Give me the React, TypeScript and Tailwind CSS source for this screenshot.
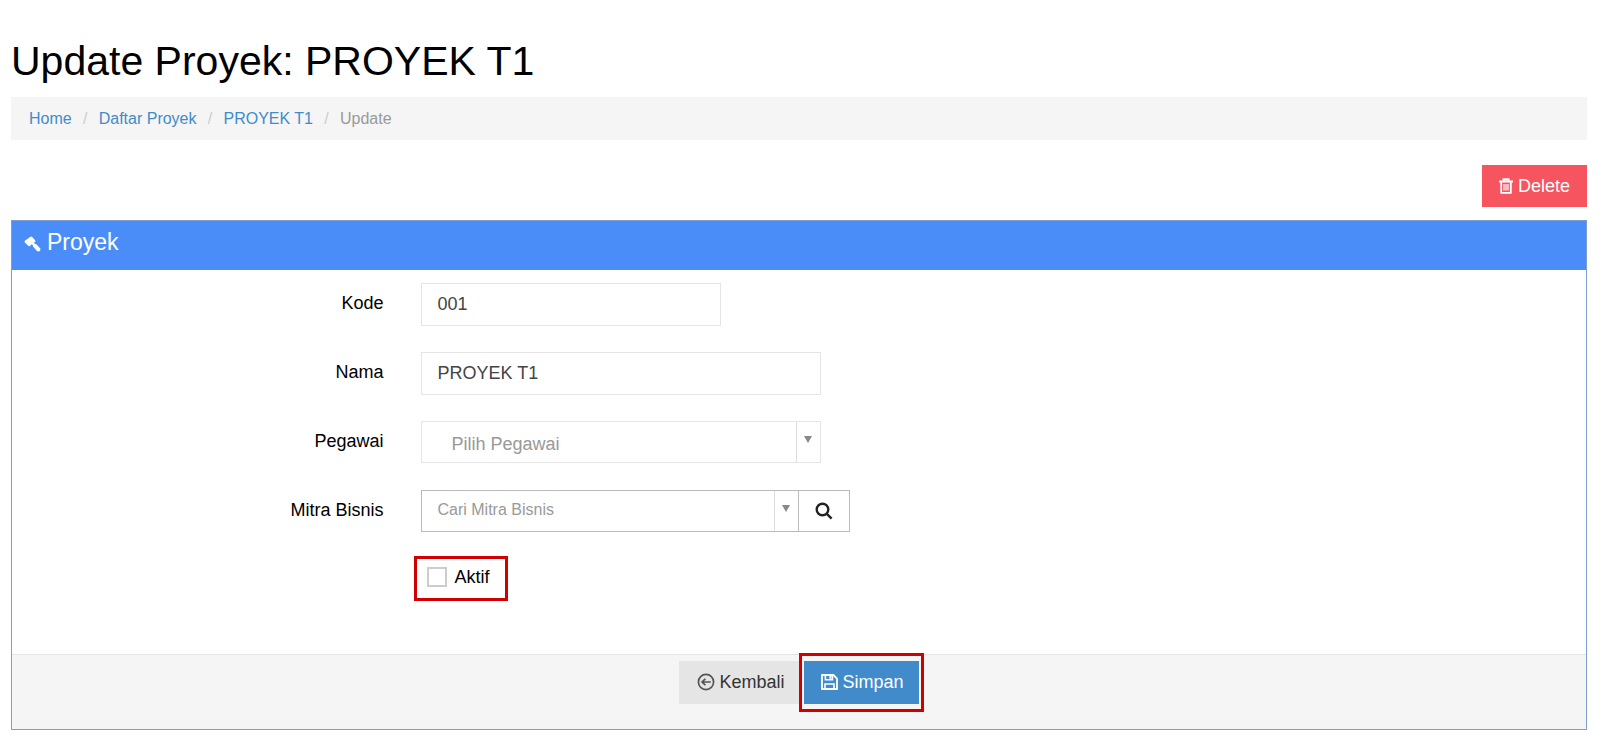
import { useState } from 'react';
import type { ReactNode } from 'react';

const FIELD = 'border bg-white px-4 text-[18px] text-[#444] outline-none';

const crumbs = [
  { label: 'Home', href: '#home' },
  { label: 'Daftar Proyek', href: '#proyek' },
  { label: 'PROYEK T1', href: '#proyek-t1' },
];

function TrashIcon() {
  return (
    <svg viewBox="0 0 14 16" className="h-4 w-3.5" fill="none" stroke="currentColor">
      <path d="M0 3.5h14M4.5 3.2V1.2h5v2" strokeWidth="2" />
      <path d="M2.2 3.5v11.3h9.6V3.5" strokeWidth="1.8" />
      <path d="M5 6v6.6M7 6v6.6M9 6v6.6" strokeWidth="1.2" />
    </svg>
  );
}

function GavelIcon() {
  return (
    <svg viewBox="0 0 17 16" className="mt-1 h-4 w-[17px] shrink-0" fill="currentColor">
      <path d="M6.8 0.4 8.2 0.9 11.4 4.6 11.2 6 9.9 6.6 10.8 7.8 12 8 16.4 12.6 16.2 14.4 14.8 15.6 13.2 15.2 9 10.4 8.8 9 7.6 8.2 6.6 9.6 5.2 10.2 4.2 9.8 0.6 6.2 0.6 5 1.6 4.2Z" />
    </svg>
  );
}

function BackIcon() {
  return (
    <svg viewBox="0 0 18 18" className="h-[18px] w-[18px] shrink-0 text-[#555]" fill="none" stroke="currentColor">
      <circle cx="9" cy="9" r="7.6" strokeWidth="1.7" />
      <path d="M13.8 9H5M8.4 5.8 5 9l3.4 3.2" strokeWidth="1.7" />
    </svg>
  );
}

function SaveIcon() {
  return (
    <svg viewBox="0 0 17 16" className="h-4 w-[17px] shrink-0" fill="none" stroke="currentColor">
      <path d="M1 1h11.4L16 4.6V15H1Z" strokeWidth="1.8" />
      <path d="M4 15V10h9v5M4.4 1v4.8h7V1" strokeWidth="1.6" />
      <path d="M9.4 1.4v3.4" strokeWidth="2" />
    </svg>
  );
}

function SearchIcon() {
  return (
    <svg viewBox="0 0 18 18" className="h-[18px] w-[18px]" fill="none" stroke="currentColor" strokeWidth="2.4">
      <circle cx="7.5" cy="7.5" r="5.8" />
      <path d="m11.6 11.6 5 5" />
    </svg>
  );
}

function Row({ label, htmlFor, children }: { label: string; htmlFor: string; children: ReactNode }) {
  return (
    <div className="mb-[26px] flex h-[43px] items-start">
      <label htmlFor={htmlFor} className="w-1/4 pt-2 pr-5 text-right">
        {label}
      </label>
      <div className="flex flex-1 pl-[17px]">{children}</div>
    </div>
  );
}

interface PickerProps {
  id: string;
  placeholder: string;
  wrapClass: string;
  selectClass: string;
}

function Picker({ id, placeholder, wrapClass, selectClass }: PickerProps) {
  return (
    <div className={`relative flex border ${wrapClass}`}>
      <select id={id} className={`h-10 flex-1 appearance-none bg-white text-[#999] outline-none ${selectClass}`}>
        <option>{placeholder}</option>
      </select>
      <span className="pointer-events-none absolute inset-y-0 right-0 flex w-6 justify-center border-l border-[#ddd] pt-3.5">
        <svg viewBox="0 0 8 7" className="h-[7px] w-2" fill="#888">
          <path d="M0 0h8L4 7Z" />
        </svg>
      </span>
    </div>
  );
}

export default function App() {
  const [kode, setKode] = useState('001');
  const [nama, setNama] = useState('PROYEK T1');
  const [aktif, setAktif] = useState(false);

  return (
    <main className="bg-white pt-9 pr-[13px] pb-[7px] pl-[11px] font-['Liberation_Sans',Arial,sans-serif] text-[18px] leading-6 text-black">
      <h1 className="mb-[11px] text-[41px] leading-[50px]">Update Proyek: PROYEK T1</h1>

      <nav aria-label="Breadcrumb" className="bg-[#f5f5f5] px-[18px] pt-2.5 pb-[9px] text-base">
        <ol className="flex">
          {crumbs.map((c) => (
            <li key={c.href} className="flex">
              <a href={c.href} className="text-[#428bca]">
                {c.label}
              </a>
              <span className="w-[27px] text-center text-[#ccc]">/</span>
            </li>
          ))}
          <li className="text-[#999]">Update</li>
        </ol>
      </nav>

      <div className="mt-[25px] mb-[13px] flex justify-end">
        <button type="button" className="flex h-[42px] items-center gap-[5px] bg-[#f6545f] px-[17px] text-white">
          <TrashIcon />
          Delete
        </button>
      </div>

      <form className="border border-[#7d9fd0]" onSubmit={(e) => e.preventDefault()}>
        <h2 className="flex h-[49px] items-center gap-1.5 bg-[#4b8df8] px-3 pb-2 text-[23px] text-white">
          <GavelIcon />
          Proyek
        </h2>

        <div className="pt-[13px] pr-2 pb-[26px]">
          <Row label="Kode" htmlFor="kode">
            <input
              id="kode"
              value={kode}
              onChange={(e) => setKode(e.target.value)}
              className={`${FIELD} h-[43px] w-[300px] border-[#e5e5e5]`}
            />
          </Row>
          <Row label="Nama" htmlFor="nama">
            <input
              id="nama"
              value={nama}
              onChange={(e) => setNama(e.target.value)}
              className={`${FIELD} h-[43px] w-[400px] border-[#e5e5e5]`}
            />
          </Row>
          <Row label="Pegawai" htmlFor="pegawai">
            <Picker
              id="pegawai"
              placeholder="Pilih Pegawai"
              wrapClass="h-[42px] w-[400px] border-[#e5e5e5]"
              selectClass="pt-1 pl-[30px]"
            />
          </Row>
          <Row label="Mitra Bisnis" htmlFor="mitra">
            <Picker
              id="mitra"
              placeholder="Cari Mitra Bisnis"
              wrapClass="h-[42px] w-[378px] border-[#bbb]"
              selectClass="pb-0.5 pl-4 text-base"
            />
            <button
              type="button"
              aria-label="Cari"
              className="flex h-[42px] w-[51px] items-center justify-center border border-l-0 border-[#bbb] text-[#222]"
            >
              <SearchIcon />
            </button>
          </Row>

          <div className="-mt-[3px] flex">
            <div className="w-1/4" />
            <div className="pl-2.5">
              <label className="flex h-[45px] items-center gap-2 border-[3px] border-[#d00000] pr-[15px] pb-1 pl-2.5">
                <input
                  type="checkbox"
                  checked={aktif}
                  onChange={(e) => setAktif(e.target.checked)}
                  className="h-5 w-5 appearance-none border-2 border-[#ccc] bg-white checked:bg-[#428bca]"
                />
                Aktif
              </label>
            </div>
          </div>
        </div>

        <div className="mt-[27px] flex h-[75px] items-start justify-center border-t border-[#e5e5e5] bg-[#f5f5f5] pl-1">
          <button
            type="button"
            className="mt-1.5 flex h-[43px] w-[120px] items-center gap-[5px] bg-[#e5e5e5] pb-0.5 pl-[18px] text-[#333]"
          >
            <BackIcon />
            Kembali
          </button>
          <span className="-mt-0.5 border-[3px] border-[#d00000] px-0.5 py-[5px]">
            <button
              type="submit"
              className="flex h-[43px] w-[115px] items-center gap-[5px] bg-[#428bca] pb-0.5 pl-[17px] text-white"
            >
              <SaveIcon />
              Simpan
            </button>
          </span>
        </div>
      </form>
    </main>
  );
}
